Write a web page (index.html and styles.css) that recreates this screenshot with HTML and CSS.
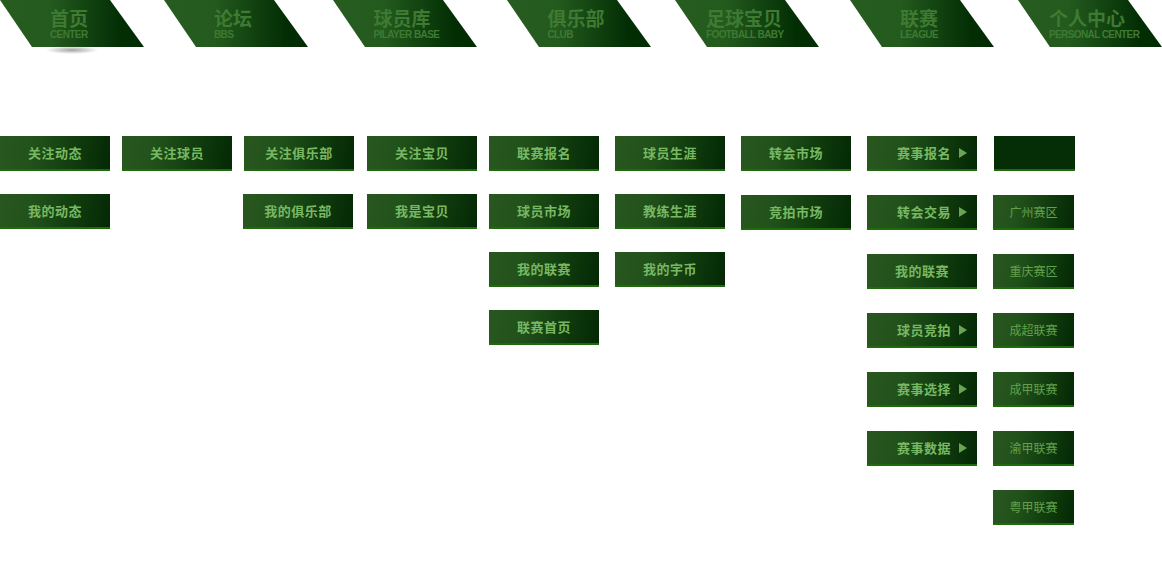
FILE: index.html
```html
<!DOCTYPE html>
<html lang="zh-CN">
<head>
<meta charset="utf-8">
<title>导航菜单</title>
<link rel="stylesheet" href="styles.css">
</head>
<body>
<nav class="nav">
  <a class="nav-item active"><span class="nav-shape"><span class="nav-label"><b>首页</b><i>CENTER</i></span></span></a>
  <a class="nav-item"><span class="nav-shape"><span class="nav-label"><b>论坛</b><i>BBS</i></span></span></a>
  <a class="nav-item"><span class="nav-shape"><span class="nav-label"><b>球员库</b><i>PILAYER BASE</i></span></span></a>
  <a class="nav-item"><span class="nav-shape"><span class="nav-label"><b>俱乐部</b><i>CLUB</i></span></span></a>
  <a class="nav-item"><span class="nav-shape"><span class="nav-label"><b>足球宝贝</b><i>FOOTBALL BABY</i></span></span></a>
  <a class="nav-item"><span class="nav-shape"><span class="nav-label"><b>联赛</b><i>LEAGUE</i></span></span></a>
  <a class="nav-item"><span class="nav-shape"><span class="nav-label"><b>个人中心</b><i>PERSONAL CENTER</i></span></span></a>
</nav>

<main class="menus">
  <ul class="col">
    <li class="btn">关注动态</li>
    <li class="btn">我的动态</li>
  </ul>
  <ul class="col">
    <li class="btn">关注球员</li>
  </ul>
  <ul class="col">
    <li class="btn">关注俱乐部</li>
    <li class="btn shift">我的俱乐部</li>
  </ul>
  <ul class="col">
    <li class="btn">关注宝贝</li>
    <li class="btn">我是宝贝</li>
  </ul>
  <ul class="col">
    <li class="btn">联赛报名</li>
    <li class="btn">球员市场</li>
    <li class="btn">我的联赛</li>
    <li class="btn">联赛首页</li>
  </ul>
  <ul class="col">
    <li class="btn">球员生涯</li>
    <li class="btn">教练生涯</li>
    <li class="btn">我的宇币</li>
  </ul>
  <ul class="col wide">
    <li class="btn">转会市场</li>
    <li class="btn">竞拍市场</li>
  </ul>
  <ul class="col wide">
    <li class="btn arrow">赛事报名</li>
    <li class="btn arrow">转会交易</li>
    <li class="btn">我的联赛</li>
    <li class="btn arrow">球员竞拍</li>
    <li class="btn arrow">赛事选择</li>
    <li class="btn arrow">赛事数据</li>
  </ul>
  <ul class="col wide">
    <li class="btn small blank"></li>
    <li class="btn small">广州赛区</li>
    <li class="btn small">重庆赛区</li>
    <li class="btn small">成超联赛</li>
    <li class="btn small">成甲联赛</li>
    <li class="btn small">渝甲联赛</li>
    <li class="btn small">粤甲联赛</li>
  </ul>
</main>
</body>
</html>
```

FILE: styles.css
```css
* { box-sizing: border-box; }

html, body {
  margin: 0;
  padding: 0;
  background: #ffffff;
  font-family: "Noto Sans CJK SC", "Liberation Sans", sans-serif;
}

/* ---------- top navigation ---------- */
.nav {
  display: grid;
  grid-template-columns: 164px 169px 174px 168px 175px 168px 144px;
  height: 47px;
}

.nav-item {
  position: relative;
  display: block;
  cursor: pointer;
}

.nav-shape {
  display: flex;
  justify-content: center;
  width: 144px;
  height: 47px;
  padding: 7px 6px 0 0;
  clip-path: polygon(0 0, 110px 0, 144px 47px, 32px 47px);
  background: linear-gradient(90deg, #265c20 0%, #245a1e 35%, #114210 62%, #032e04 84%, #022b03 100%);
}

.nav-label {
  display: inline-flex;
  flex-direction: column;
  align-items: flex-start;
  color: #3e7a32;
}

.nav-label b {
  font-size: 19px;
  line-height: 22px;
  font-weight: 700;
  white-space: nowrap;
}

.nav-label i {
  width: 0;
  margin-top: 1px;
  font-style: normal;
  font-weight: 700;
  font-family: "Liberation Sans", Arial, sans-serif;
  font-size: 10px;
  line-height: 10px;
  letter-spacing: -0.6px;
  white-space: nowrap;
}

.nav-item.active::after {
  content: "";
  position: absolute;
  left: 46px;
  top: 46px;
  width: 52px;
  height: 8px;
  border-radius: 50%;
  background: radial-gradient(ellipse at center, rgba(90, 90, 90, 0.55) 0%, rgba(120, 120, 120, 0.25) 45%, rgba(255, 255, 255, 0) 72%);
}

/* ---------- dropdown menus ---------- */
.menus {
  display: grid;
  grid-template-columns: 122px 122px 123px 122px 126px 126px 126px 126px 81px;
  align-items: start;
  margin-top: 89px;
}

.col {
  list-style: none;
  margin: 0;
  padding: 0;
  display: flex;
  flex-direction: column;
  gap: 23px;
}

.col.wide { gap: 24px; }

.btn {
  display: flex;
  align-items: center;
  justify-content: center;
  width: 110px;
  height: 35px;
  border-bottom: 2px solid #1f6a0b;
  background: linear-gradient(100deg, #28581f 0%, #22521b 30%, #0f3a0d 70%, #042805 100%);
  color: #78b862;
  font-size: 13px;
  font-weight: 700;
  letter-spacing: 0.5px;
  cursor: pointer;
}

.btn.shift { margin-left: -1px; }

.btn.arrow {
  justify-content: flex-end;
  gap: 8px;
  padding-right: 10px;
}

.btn.arrow::after {
  content: "";
  width: 0;
  height: 0;
  border-top: 5px solid transparent;
  border-bottom: 5px solid transparent;
  border-left: 8px solid #6aa556;
}

.btn.small {
  width: 81px;
  font-size: 12px;
  font-weight: 400;
  letter-spacing: 0;
  color: #62a04c;
}

.btn.blank {
  margin-left: 1px;
  background: #052e06;
}
```
